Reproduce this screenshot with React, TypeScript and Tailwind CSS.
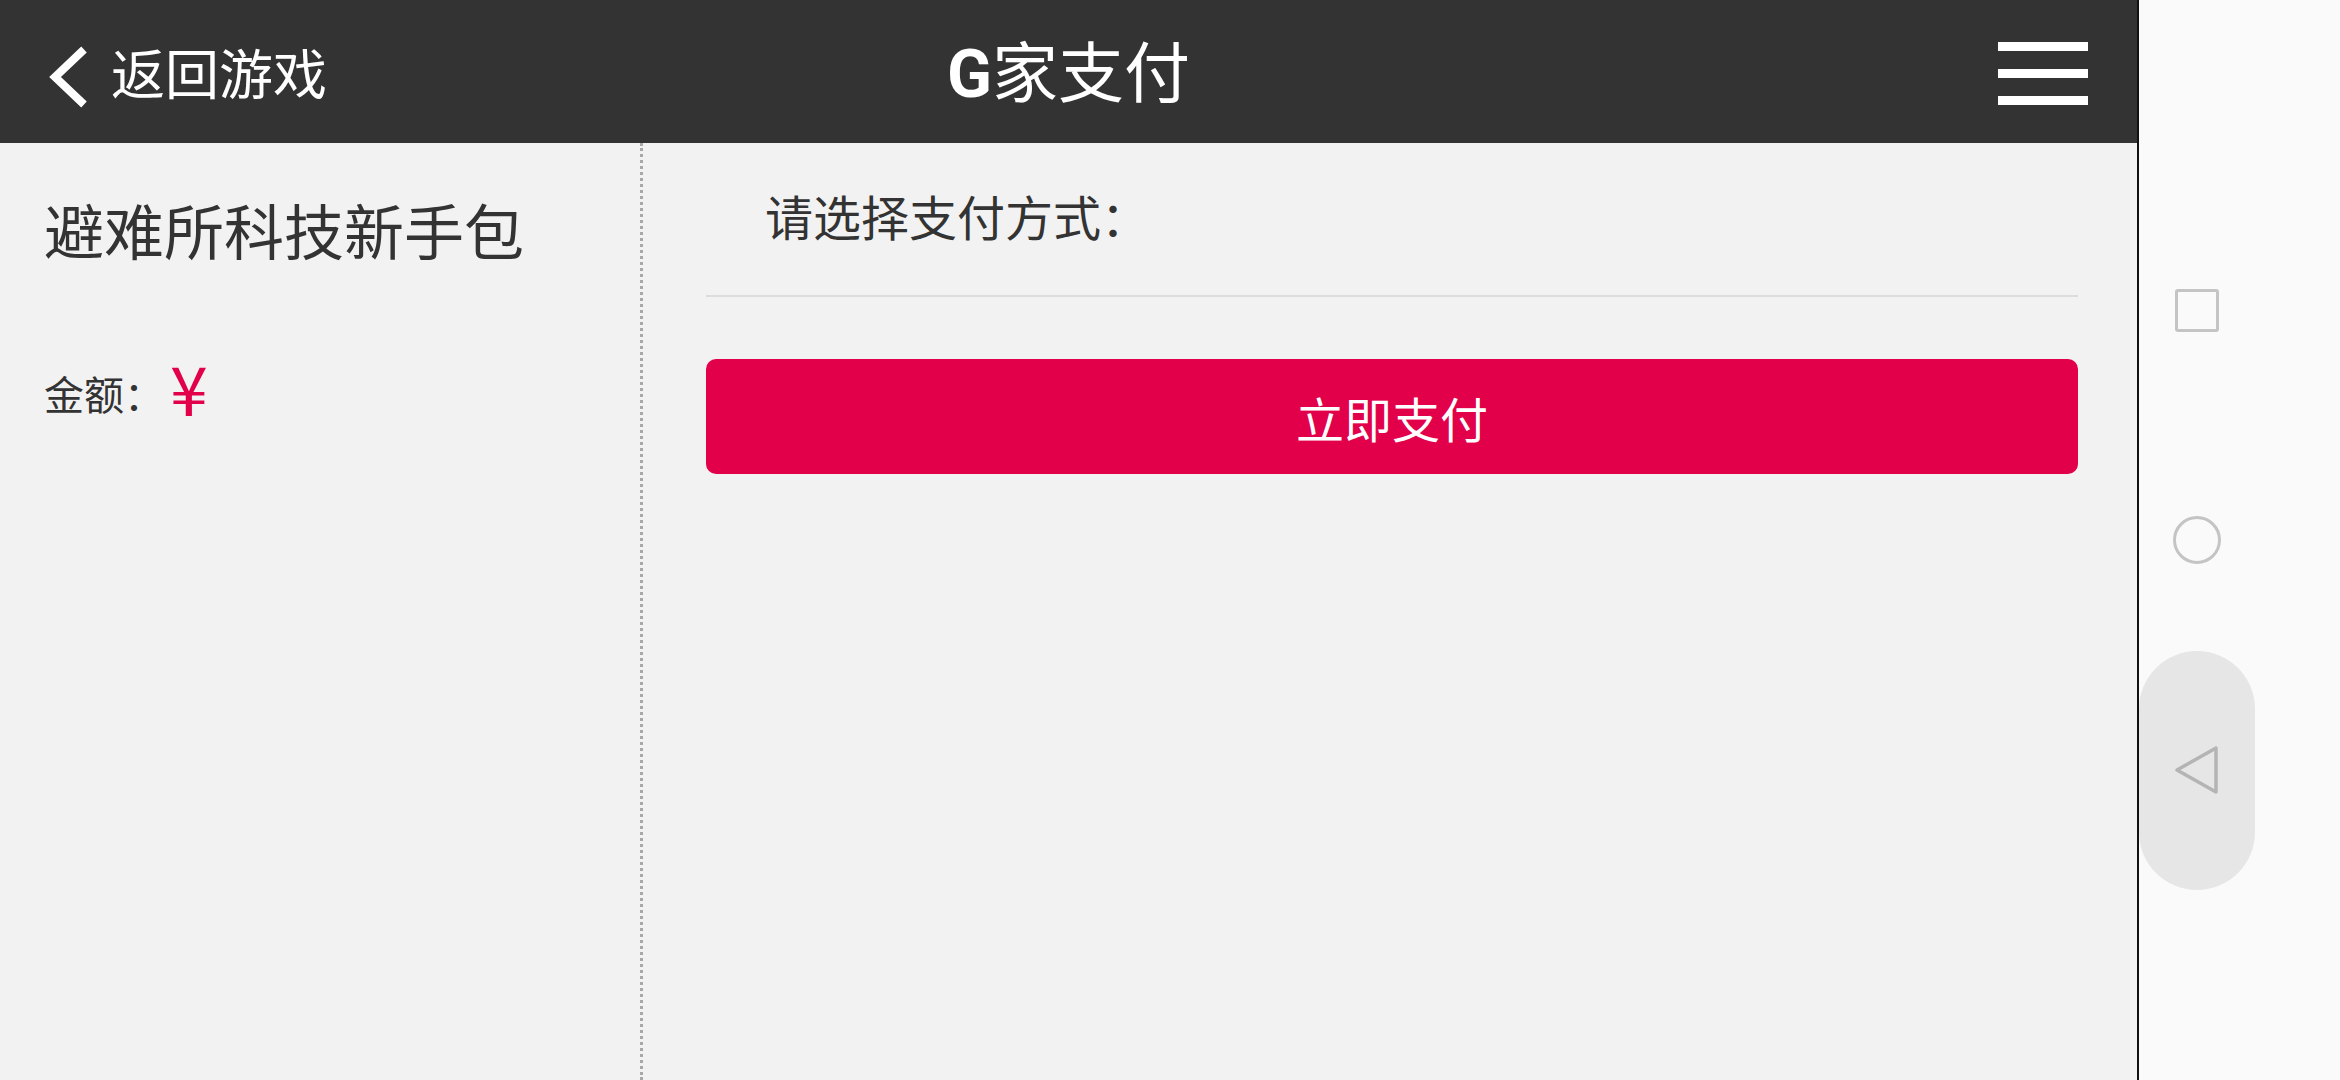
import React from "react";

export default function App() {
  return (
    <div className="w-[2340px] h-[1080px] flex bg-[#f2f2f2] font-['Noto_Sans_CJK_SC',sans-serif] overflow-hidden">
      <div className="w-[2137px] shrink-0 flex flex-col">
        <header className="h-[143px] bg-[#333333] grid grid-cols-[1fr_auto_1fr] items-center text-white shrink-0">
          <div className="flex items-center">
            <svg className="ml-[44px]" width="50" height="80" viewBox="0 0 50 80" fill="none">
              <path d="M40 17.5 L11 45 L40 72.5" stroke="white" strokeWidth="8" strokeLinejoin="miter" />
            </svg>
            <span className="ml-[17px] text-[54px] leading-none">返回游戏</span>
          </div>
          <div className="text-[66px] leading-none whitespace-nowrap">
            <span className="font-bold font-['Roboto',sans-serif]">G</span>
            <span>家支付</span>
          </div>
          <div className="flex justify-end pr-[49px]">
            <div className="flex flex-col gap-[18px] mt-[4px]">
              <div className="w-[90px] h-[9px] bg-white" />
              <div className="w-[90px] h-[9px] bg-white" />
              <div className="w-[90px] h-[9px] bg-white" />
            </div>
          </div>
        </header>
        <div className="flex flex-1">
          <aside className="w-[643px] border-r-[3px] border-dotted border-[#a8a8a8] pl-[44px] pt-[56px] text-[#333333]">
            <div className="text-[60px] leading-none">避难所科技新手包</div>
            <div className="mt-[94px] flex items-start leading-none">
              <span className="mt-[20px] text-[40px]">金额：</span>
              <span className="ml-[6px] text-[68px] text-[#e2004b]">¥</span>
            </div>
          </aside>
          <main className="flex-1 pl-[63px] pr-[59px] pt-[48px]">
            <div className="ml-[59px] text-[48px] leading-none text-[#333333]">请选择支付方式：</div>
            <div className="mt-[56px] h-[2px] bg-[#dcdcdc]" />
            <button className="mt-[62px] w-full h-[115px] rounded-[10px] bg-[#e2004b] text-white text-[48px] leading-none flex items-center justify-center">
              立即支付
            </button>
          </main>
        </div>
      </div>
      <div className="w-[2px] shrink-0 bg-[#111111]" />
      <nav className="w-[201px] shrink-0 bg-[#fafafa] flex flex-col justify-center">
        <div className="w-[116px] h-[230px] flex items-center justify-center">
          <div className="w-[44px] h-[43px] border-[3px] border-[#c4c4c4] rounded-[3px]" />
        </div>
        <div className="w-[116px] h-[230px] flex items-center justify-center">
          <div className="w-[48px] h-[48px] border-[3px] border-[#c4c4c4] rounded-full" />
        </div>
        <div className="w-[116px] h-[230px] flex items-center justify-center">
          <div className="w-[116px] h-[239px] shrink-0 rounded-full bg-[#e6e6e6] flex items-center justify-center">
            <svg width="46" height="52" viewBox="0 0 46 52" fill="none">
              <path d="M3 26 L42 4 L42 48 Z" stroke="#b4b4b4" strokeWidth="3.5" strokeLinejoin="round" />
            </svg>
          </div>
        </div>
      </nav>
    </div>
  );
}
